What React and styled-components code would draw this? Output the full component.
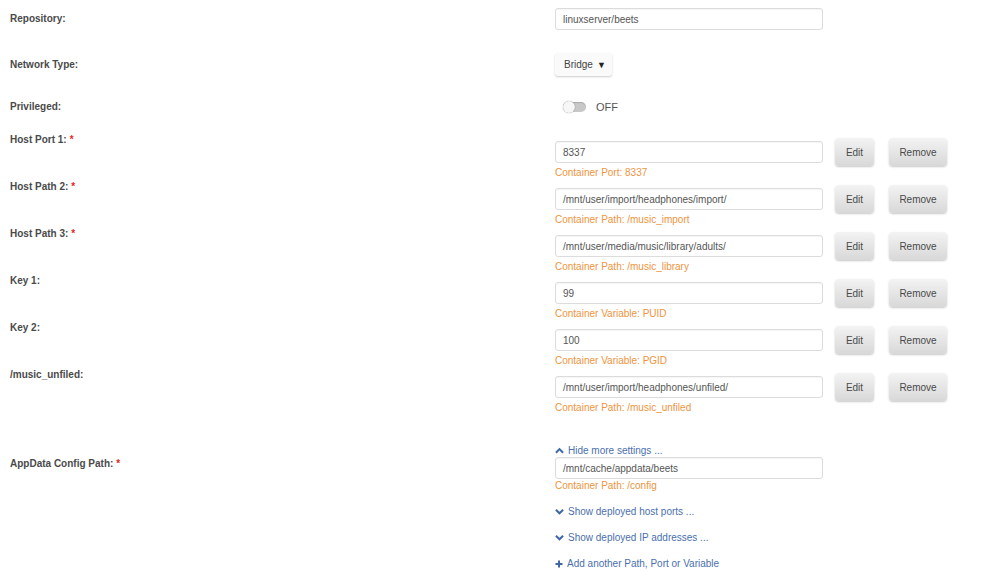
import React from "react";
import styled, { createGlobalStyle } from "styled-components";

const Global = createGlobalStyle`
  html, body { margin: 0; padding: 0; background: #fff; }
  body { font-family: "Liberation Sans", Arial, sans-serif; color: #555; }
`;

const Page = styled.div`
  width: 1000px;
  height: 584px;
  overflow: hidden;
  padding: 8px 0 0 10px;
  box-sizing: border-box;
`;

const Row = styled.div`
  display: grid;
  grid-template-columns: 545px 1fr;
  align-items: ${(p) => (p.$top ? "start" : "center")};
  min-height: ${(p) => p.$h || 0}px;
  margin-top: ${(p) => p.$mt || 0}px;
`;

const Label = styled.div`
  font-size: 10px;
  font-weight: bold;
  color: #4a4a4a;
  line-height: 14px;
  padding-top: ${(p) => p.$pt || 0}px;
`;

const Req = styled.span`
  color: #e22828;
  margin-left: 3px;
`;

const Content = styled.div`
  display: flex;
  flex-direction: column;
  align-items: flex-start;
  padding-top: ${(p) => p.$pt || 0}px;
`;

const Line = styled.div`
  display: flex;
  align-items: center;
`;

const TextInput = styled.div`
  width: 268px;
  height: 22px;
  box-sizing: border-box;
  border: 1px solid #dcdcdc;
  border-radius: 3px;
  background: #fff;
  box-shadow: inset 0 1px 1px rgba(0, 0, 0, 0.04);
  font-size: 10px;
  color: #555;
  padding: 0 7px;
  display: flex;
  align-items: center;
`;

const Button = styled.div`
  height: 28px;
  width: ${(p) => p.$w}px;
  margin-left: ${(p) => p.$ml}px;
  box-sizing: border-box;
  border-radius: 4px;
  background: linear-gradient(to bottom, #f3f3f3, #d8d8d8);
  box-shadow: 0 1px 2px rgba(0, 0, 0, 0.22);
  font-size: 10px;
  color: #4a4a4a;
  display: flex;
  align-items: center;
  justify-content: center;
`;

const Hint = styled.div`
  font-size: 10px;
  line-height: 13px;
  color: #ee9440;
  height: 13px;
`;

const Select = styled.div`
  width: 57px;
  height: 23px;
  box-sizing: border-box;
  background: #fafafa;
  border-radius: 3px;
  box-shadow: 0 1px 2px rgba(0, 0, 0, 0.2);
  font-size: 10px;
  color: #444;
  display: flex;
  align-items: center;
  justify-content: space-between;
  padding: 0 6px 0 9px;
`;

const Caret = styled.span`
  font-size: 9px;
  color: #222;
`;

const Toggle = styled.div`
  display: flex;
  align-items: center;
  padding-left: 8px;
  gap: 10px;
  font-size: 11px;
  color: #555;
`;

const Track = styled.div`
  position: relative;
  width: 23px;
  height: 10px;
  border-radius: 5px;
  background: #c8c8c8;
  box-shadow: inset 0 1px 1px rgba(0, 0, 0, 0.15);
`;

const Knob = styled.div`
  position: absolute;
  left: 0;
  top: -1px;
  width: 12px;
  height: 12px;
  border-radius: 50%;
  background: #f7f7f7;
  box-shadow: 0 0 1px rgba(0, 0, 0, 0.5);
`;

const Link = styled.div`
  display: flex;
  align-items: center;
  gap: 4px;
  font-size: 10px;
  line-height: 13px;
  color: #4a6fae;
  margin-top: ${(p) => p.$mt || 0}px;
`;

const Spacer = styled.div`
  height: ${(p) => p.$h}px;
`;

const Chevron = ({ up }) => (
  <svg width="9" height="7" viewBox="0 0 10 7">
    <path
      d={up ? "M1 6 L5 2 L9 6" : "M1 1.5 L5 5.5 L9 1.5"}
      fill="none"
      stroke="#3f67a8"
      strokeWidth="2.2"
    />
  </svg>
);

const Plus = () => (
  <svg width="8" height="8" viewBox="0 0 8 8">
    <path d="M4 0.5 V7.5 M0.5 4 H7.5" stroke="#3f67a8" strokeWidth="2" />
  </svg>
);

const configs = [
  { label: "Host Port 1:", req: true, value: "8337", hint: "Container Port: 8337" },
  { label: "Host Path 2:", req: true, value: "/mnt/user/import/headphones/import/", hint: "Container Path: /music_import" },
  { label: "Host Path 3:", req: true, value: "/mnt/user/media/music/library/adults/", hint: "Container Path: /music_library" },
  { label: "Key 1:", value: "99", hint: "Container Variable: PUID" },
  { label: "Key 2:", value: "100", hint: "Container Variable: PGID" },
  { label: "/music_unfiled:", value: "/mnt/user/import/headphones/unfiled/", hint: "Container Path: /music_unfiled" },
];

const ConfigRow = ({ label, req, value, hint }) => (
  <Row $top $h={47}>
    <Label $pt={1}>
      {label}
      {req && <Req>*</Req>}
    </Label>
    <Content $pt={6}>
      <Line>
        <TextInput>{value}</TextInput>
        <Button $w={39} $ml={12}>Edit</Button>
        <Button $w={58} $ml={15}>Remove</Button>
      </Line>
      <Hint>{hint}</Hint>
    </Content>
  </Row>
);

export default function App() {
  return (
    <Page>
      <Global />
      <Row $h={22}>
        <Label>Repository:</Label>
        <Content>
          <TextInput>linuxserver/beets</TextInput>
        </Content>
      </Row>
      <Row $h={23} $mt={23}>
        <Label>Network Type:</Label>
        <Content>
          <Select>
            Bridge <Caret>▼</Caret>
          </Select>
        </Content>
      </Row>
      <Row $h={20} $mt={21}>
        <Label>Privileged:</Label>
        <Content>
          <Toggle>
            <Track>
              <Knob />
            </Track>
            OFF
          </Toggle>
        </Content>
      </Row>
      <Spacer $h={15} />
      {configs.map((c) => (
        <ConfigRow key={c.label} {...c} />
      ))}
      <Row $top $mt={30}>
        <div />
        <Link>
          <Chevron up /> Hide more settings ...
        </Link>
      </Row>
      <Row $top>
        <Label $pt={0}>
          AppData Config Path:<Req>*</Req>
        </Label>
        <Content>
          <TextInput>/mnt/cache/appdata/beets</TextInput>
          <Hint>Container Path: /config</Hint>
        </Content>
      </Row>
      <Row $top>
        <div />
        <Content>
          <Link $mt={13}>
            <Chevron /> Show deployed host ports ...
          </Link>
          <Link $mt={13}>
            <Chevron /> Show deployed IP addresses ...
          </Link>
          <Link $mt={13}>
            <Plus /> Add another Path, Port or Variable
          </Link>
        </Content>
      </Row>
    </Page>
  );
}
